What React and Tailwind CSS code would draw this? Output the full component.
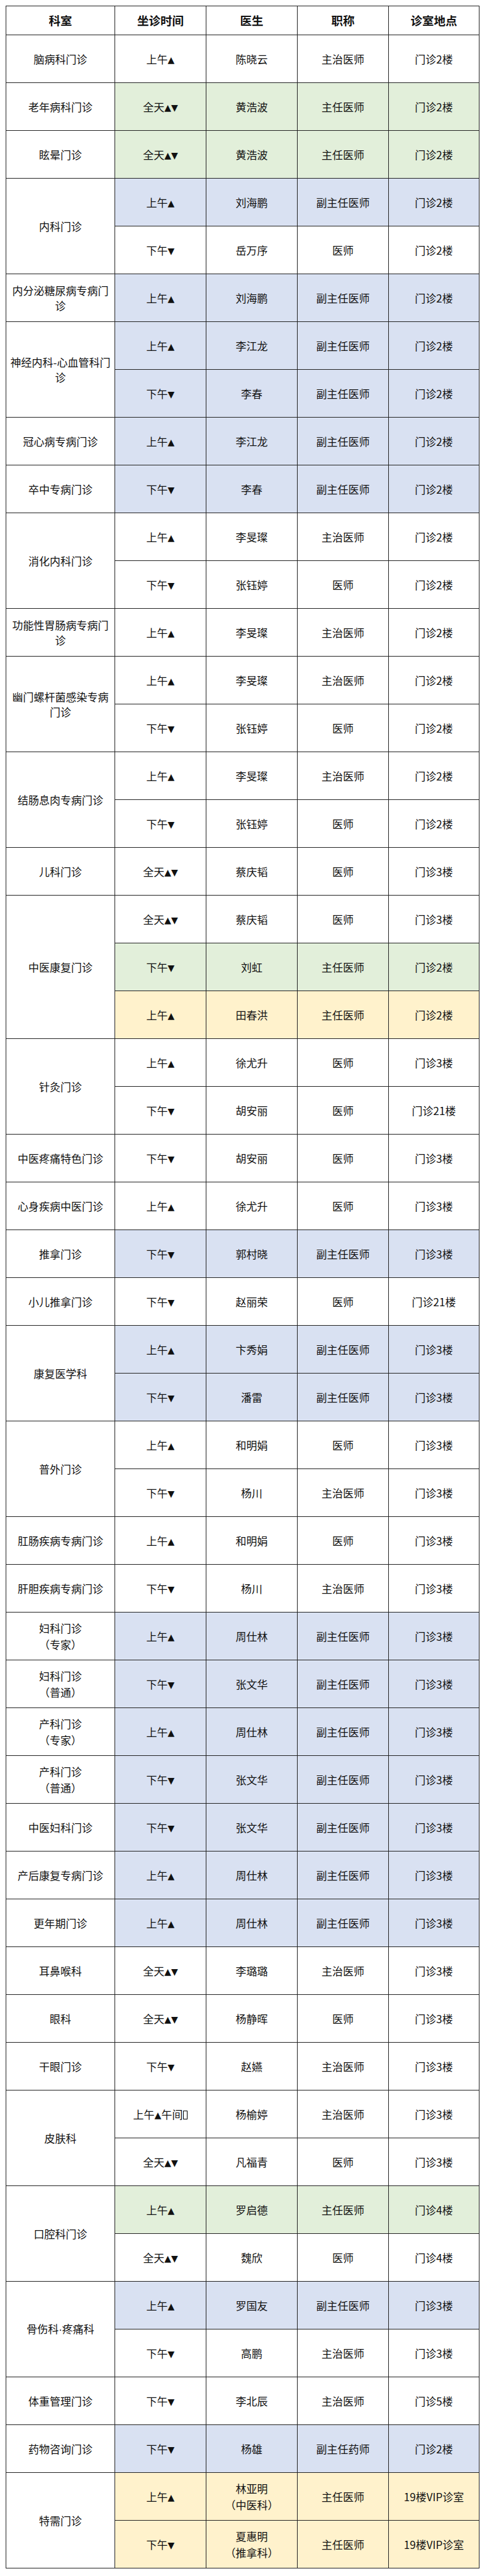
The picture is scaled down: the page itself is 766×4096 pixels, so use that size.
import React from "react";

const W = "bg-white";
const G = "bg-[#e2efda]";
const B = "bg-[#d9e1f2]";
const Y = "bg-[#fff2cc]";

const groups = [
  { name: "脑病科门诊", rows: [["上午▲", "陈晓云", "主治医师", "门诊2楼", W]] },
  { name: "老年病科门诊", rows: [["全天▲▼", "黄浩波", "主任医师", "门诊2楼", G]] },
  { name: "眩晕门诊", rows: [["全天▲▼", "黄浩波", "主任医师", "门诊2楼", G]] },
  {
    name: "内科门诊",
    rows: [
      ["上午▲", "刘海鹏", "副主任医师", "门诊2楼", B],
      ["下午▼", "岳万序", "医师", "门诊2楼", W],
    ],
  },
  { name: "内分泌糖尿病专病门诊", rows: [["上午▲", "刘海鹏", "副主任医师", "门诊2楼", B]] },
  {
    name: "神经内科-心血管科门诊",
    rows: [
      ["上午▲", "李江龙", "副主任医师", "门诊2楼", B],
      ["下午▼", "李春", "副主任医师", "门诊2楼", B],
    ],
  },
  { name: "冠心病专病门诊", rows: [["上午▲", "李江龙", "副主任医师", "门诊2楼", B]] },
  { name: "卒中专病门诊", rows: [["下午▼", "李春", "副主任医师", "门诊2楼", B]] },
  {
    name: "消化内科门诊",
    rows: [
      ["上午▲", "李旻璨", "主治医师", "门诊2楼", W],
      ["下午▼", "张钰婷", "医师", "门诊2楼", W],
    ],
  },
  { name: "功能性胃肠病专病门诊", rows: [["上午▲", "李旻璨", "主治医师", "门诊2楼", W]] },
  {
    name: "幽门螺杆菌感染专病门诊",
    rows: [
      ["上午▲", "李旻璨", "主治医师", "门诊2楼", W],
      ["下午▼", "张钰婷", "医师", "门诊2楼", W],
    ],
  },
  {
    name: "结肠息肉专病门诊",
    rows: [
      ["上午▲", "李旻璨", "主治医师", "门诊2楼", W],
      ["下午▼", "张钰婷", "医师", "门诊2楼", W],
    ],
  },
  { name: "儿科门诊", rows: [["全天▲▼", "蔡庆韬", "医师", "门诊3楼", W]] },
  {
    name: "中医康复门诊",
    rows: [
      ["全天▲▼", "蔡庆韬", "医师", "门诊3楼", W],
      ["下午▼", "刘虹", "主任医师", "门诊2楼", G],
      ["上午▲", "田春洪", "主任医师", "门诊2楼", Y],
    ],
  },
  {
    name: "针灸门诊",
    rows: [
      ["上午▲", "徐尤升", "医师", "门诊3楼", W],
      ["下午▼", "胡安丽", "医师", "门诊21楼", W],
    ],
  },
  { name: "中医疼痛特色门诊", rows: [["下午▼", "胡安丽", "医师", "门诊3楼", W]] },
  { name: "心身疾病中医门诊", rows: [["上午▲", "徐尤升", "医师", "门诊3楼", W]] },
  { name: "推拿门诊", rows: [["下午▼", "郭村晓", "副主任医师", "门诊3楼", B]] },
  { name: "小儿推拿门诊", rows: [["下午▼", "赵丽荣", "医师", "门诊21楼", W]] },
  {
    name: "康复医学科",
    rows: [
      ["上午▲", "卞秀娟", "副主任医师", "门诊3楼", B],
      ["下午▼", "潘雷", "副主任医师", "门诊3楼", B],
    ],
  },
  {
    name: "普外门诊",
    rows: [
      ["上午▲", "和明娟", "医师", "门诊3楼", W],
      ["下午▼", "杨川", "主治医师", "门诊3楼", W],
    ],
  },
  { name: "肛肠疾病专病门诊", rows: [["上午▲", "和明娟", "医师", "门诊3楼", W]] },
  { name: "肝胆疾病专病门诊", rows: [["下午▼", "杨川", "主治医师", "门诊3楼", W]] },
  { name: ["妇科门诊", "（专家）"], rows: [["上午▲", "周仕林", "副主任医师", "门诊3楼", B]] },
  { name: ["妇科门诊", "（普通）"], rows: [["下午▼", "张文华", "副主任医师", "门诊3楼", B]] },
  { name: ["产科门诊", "（专家）"], rows: [["上午▲", "周仕林", "副主任医师", "门诊3楼", B]] },
  { name: ["产科门诊", "（普通）"], rows: [["下午▼", "张文华", "副主任医师", "门诊3楼", B]] },
  { name: "中医妇科门诊", rows: [["下午▼", "张文华", "副主任医师", "门诊3楼", B]] },
  { name: "产后康复专病门诊", rows: [["上午▲", "周仕林", "副主任医师", "门诊3楼", B]] },
  { name: "更年期门诊", rows: [["上午▲", "周仕林", "副主任医师", "门诊3楼", B]] },
  { name: "耳鼻喉科", rows: [["全天▲▼", "李璐璐", "主治医师", "门诊3楼", W]] },
  { name: "眼科", rows: [["全天▲▼", "杨静晖", "医师", "门诊3楼", W]] },
  { name: "干眼门诊", rows: [["下午▼", "赵嬿", "主治医师", "门诊3楼", W]] },
  {
    name: "皮肤科",
    rows: [
      ["上午▲午间□", "杨榆婷", "主治医师", "门诊3楼", W],
      ["全天▲▼", "凡福青", "医师", "门诊3楼", W],
    ],
  },
  {
    name: "口腔科门诊",
    rows: [
      ["上午▲", "罗启德", "主任医师", "门诊4楼", G],
      ["全天▲▼", "魏欣", "医师", "门诊4楼", W],
    ],
  },
  {
    name: "骨伤科·疼痛科",
    rows: [
      ["上午▲", "罗国友", "副主任医师", "门诊3楼", B],
      ["下午▼", "高鹏", "主治医师", "门诊3楼", W],
    ],
  },
  { name: "体重管理门诊", rows: [["下午▼", "李北辰", "主治医师", "门诊5楼", W]] },
  { name: "药物咨询门诊", rows: [["下午▼", "杨雄", "副主任药师", "门诊2楼", B]] },
  {
    name: "特需门诊",
    rows: [
      ["上午▲", ["林亚明", "（中医科）"], "主任医师", "19楼VIP诊室", Y],
      ["下午▼", ["夏惠明", "（推拿科）"], "主任医师", "19楼VIP诊室", Y],
    ],
  },
];

function Txt({ t }) {
  return (
    <span>
      {Array.from(t).map((ch, i) => {
        if (ch === "▲" || ch === "▼") {
          return (
            <span key={i} className="font-['DejaVu_Sans'] text-[14px] align-[1px]">
              {ch}
            </span>
          );
        }
        if (ch === "□") {
          return (
            <span
              key={i}
              className="inline-block w-[7px] h-[14px] border border-black align-[-1px] ml-[1px]"
            />
          );
        }
        if (ch === "·") {
          return (
            <span key={i} className="font-['Liberation_Sans']">
              {ch}
            </span>
          );
        }
        return <React.Fragment key={i}>{ch}</React.Fragment>;
      })}
    </span>
  );
}

function Multi({ v }) {
  if (Array.isArray(v)) {
    return (
      <div className="leading-[26px]">
        {v.map((line, i) => (
          <div key={i}>{line}</div>
        ))}
      </div>
    );
  }
  return <Txt t={v} />;
}

const cell = "border border-[#222] text-center align-middle p-0";

export default function App() {
  return (
    <div className="w-[766px] min-h-screen bg-white pt-[9px] pl-[9px] font-['Noto_Sans_CJK_SC',sans-serif] text-[#111]">
      <table className="table-fixed border-collapse w-[752px]">
        <colgroup>
          <col className="w-[173px]" />
          <col className="w-[145px]" />
          <col className="w-[145px]" />
          <col className="w-[145px]" />
          <col className="w-[144px]" />
        </colgroup>
        <thead>
          <tr className="h-[46px]">
            {["科室", "坐诊时间", "医生", "职称", "诊室地点"].map((h) => (
              <th key={h} className={`${cell} bg-white text-[18.5px] font-bold`}>
                {h}
              </th>
            ))}
          </tr>
        </thead>
        <tbody className="text-[17px]">
          {groups.map((g, gi) =>
            g.rows.map((r, ri) => (
              <tr key={`${gi}-${ri}`} className="h-[76px]">
                {ri === 0 && (
                  <td rowSpan={g.rows.length} className={`${cell} bg-white px-[4px] leading-[24px]`}>
                    <Multi v={g.name} />
                  </td>
                )}
                <td className={`${cell} ${r[4]}`}>
                  <Txt t={r[0]} />
                </td>
                <td className={`${cell} ${r[4]}`}>
                  <Multi v={r[1]} />
                </td>
                <td className={`${cell} ${r[4]}`}>{r[2]}</td>
                <td className={`${cell} ${r[4]}`}>{r[3]}</td>
              </tr>
            ))
          )}
        </tbody>
      </table>
    </div>
  );
}
